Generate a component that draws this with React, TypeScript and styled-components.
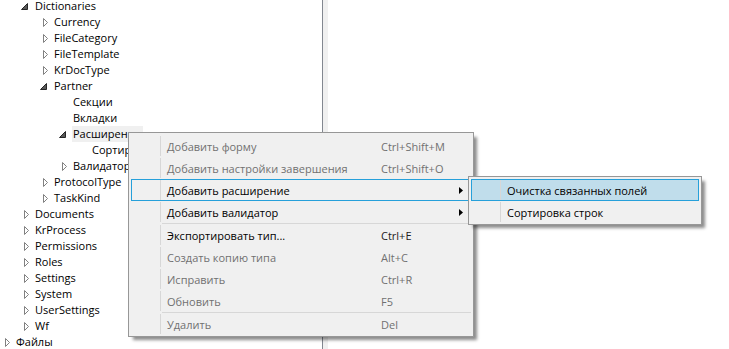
import React from "react";
import styled, { createGlobalStyle } from "styled-components";

type NodeState = "expanded" | "collapsed" | "leaf";

interface TreeNode {
  level: number;
  label: string;
  state: NodeState;
  selected?: boolean;
}

interface MenuEntry {
  label?: string;
  shortcut?: string;
  disabled?: boolean;
  submenu?: boolean;
  highlighted?: boolean;
  separator?: boolean;
}

const tree: TreeNode[] = [
  { level: 1, label: "Dictionaries", state: "expanded" },
  { level: 2, label: "Currency", state: "collapsed" },
  { level: 2, label: "FileCategory", state: "collapsed" },
  { level: 2, label: "FileTemplate", state: "collapsed" },
  { level: 2, label: "KrDocType", state: "collapsed" },
  { level: 2, label: "Partner", state: "expanded" },
  { level: 3, label: "Секции", state: "leaf" },
  { level: 3, label: "Вкладки", state: "leaf" },
  { level: 3, label: "Расширения", state: "expanded", selected: true },
  { level: 4, label: "Сортировка строк", state: "leaf" },
  { level: 3, label: "Валидаторы", state: "collapsed" },
  { level: 2, label: "ProtocolType", state: "collapsed" },
  { level: 2, label: "TaskKind", state: "collapsed" },
  { level: 1, label: "Documents", state: "collapsed" },
  { level: 1, label: "KrProcess", state: "collapsed" },
  { level: 1, label: "Permissions", state: "collapsed" },
  { level: 1, label: "Roles", state: "collapsed" },
  { level: 1, label: "Settings", state: "collapsed" },
  { level: 1, label: "System", state: "collapsed" },
  { level: 1, label: "UserSettings", state: "collapsed" },
  { level: 1, label: "Wf", state: "collapsed" },
  { level: 0, label: "Файлы", state: "collapsed" },
];

const menu: MenuEntry[] = [
  { label: "Добавить форму", shortcut: "Ctrl+Shift+M", disabled: true },
  { label: "Добавить настройки завершения", shortcut: "Ctrl+Shift+O", disabled: true },
  { label: "Добавить расширение", submenu: true, highlighted: true },
  { label: "Добавить валидатор", submenu: true },
  { separator: true },
  { label: "Экспортировать тип...", shortcut: "Ctrl+E" },
  { label: "Создать копию типа", shortcut: "Alt+C", disabled: true },
  { label: "Исправить", shortcut: "Ctrl+R", disabled: true },
  { label: "Обновить", shortcut: "F5", disabled: true },
  { separator: true },
  { label: "Удалить", shortcut: "Del", disabled: true },
];

const submenu: MenuEntry[] = [
  { label: "Очистка связанных полей", highlighted: true },
  { label: "Сортировка строк" },
];

const GlobalStyle = createGlobalStyle`
  html, body {
    margin: 0;
    padding: 0;
    background: #ffffff;
  }
  body {
    font-family: "Segoe UI", "Open Sans", "Noto Sans", sans-serif;
    font-size: 11px;
    color: #000;
  }
`;

const Window = styled.div`
  position: relative;
  display: flex;
  width: 729px;
  height: 349px;
  overflow: hidden;
  background: #fff;
`;

const TreePanel = styled.div`
  width: 322px;
  border-right: 1px solid #828790;
  overflow: hidden;
`;

const TreeList = styled.div`
  display: flex;
  flex-direction: column;
  margin-top: -2px;
`;

const TreeRow = styled.div<{ $level: number }>`
  display: flex;
  align-items: center;
  height: 16px;
  padding-left: ${(p) => p.$level * 19}px;
  white-space: nowrap;
`;

const Toggle = styled.span`
  display: flex;
  width: 15px;
  height: 16px;
  flex: none;
`;

const NodeLabel = styled.span<{ $selected?: boolean }>`
  padding: 0 2px 0 1px;
  line-height: 16px;
  background: ${(p) => (p.$selected ? "#f0f0f0" : "transparent")};
`;

const Splitter = styled.div`
  width: 5px;
  background: #f0f0f0;
`;

const Content = styled.div`
  flex: 1;
  background: #fff;
`;

const MenuBox = styled.div<{ $left: number; $top: number; $width: number }>`
  position: absolute;
  left: ${(p) => p.$left}px;
  top: ${(p) => p.$top}px;
  width: ${(p) => p.$width}px;
  box-sizing: border-box;
  padding: 2px 2px 1px;
  background: #f0f0f0;
  border: 1px solid #979797;
  box-shadow: 4px 4px 3px -1px rgba(0, 0, 0, 0.45);
  display: flex;
  flex-direction: column;
`;

const MenuRow = styled.div<{ $disabled?: boolean; $active?: "open" | "hover" }>`
  display: flex;
  align-items: center;
  height: 22px;
  box-sizing: border-box;
  border: 1px solid ${(p) => (p.$active ? "#26a0da" : "transparent")};
  background: ${(p) => (p.$active === "hover" ? "#c0ddeb" : "transparent")};
  color: ${(p) => (p.$disabled ? "#707070" : "#000")};
  white-space: nowrap;
`;

const IconCell = styled.span`
  width: 28px;
  height: 20px;
  flex: none;
  border-right: 1px solid #d7d7d7;
`;

const ItemLabel = styled.span<{ $basis?: number }>`
  flex: ${(p) => (p.$basis ? `0 0 ${p.$basis}px` : "1")};
  box-sizing: border-box;
  padding: 2px 0 0 6px;
  line-height: 18px;
`;

const Shortcut = styled.span<{ $disabled?: boolean }>`
  flex: 1;
  padding-top: 2px;
  line-height: 18px;
  color: ${(p) => (p.$disabled ? "#707070" : "#222")};
`;

const ArrowCell = styled.span`
  width: 14px;
  flex: none;
  display: flex;
  align-items: center;
  padding-left: 3px;
  box-sizing: border-box;
`;

const Separator = styled.div`
  height: 1px;
  margin-left: 31px;
  background: #d7d7d7;
`;

const ExpandGlyph = ({ state }: { state: NodeState }) => {
  if (state === "leaf") return null;
  return (
    <svg width="15" height="16" viewBox="0 0 15 16">
      {state === "expanded" ? (
        <polygon points="2.5,11.5 8.5,11.5 8.5,5.5" fill="#595959" stroke="#262626" strokeWidth="1" />
      ) : (
        <polygon points="5.5,4.5 5.5,12.5 9.5,8.5" fill="#fff" stroke="#818181" strokeWidth="1" />
      )}
    </svg>
  );
};

const SubArrow = () => (
  <svg width="4" height="7" viewBox="0 0 4 7">
    <polygon points="0,0 4,3.5 0,7" fill="#000" />
  </svg>
);

const Menu = ({ items, left, top, width, labelBasis }: {
  items: MenuEntry[];
  left: number;
  top: number;
  width: number;
  labelBasis?: number;
}) => (
  <MenuBox $left={left} $top={top} $width={width}>
    {items.map((item, i) =>
      item.separator ? (
        <Separator key={i} />
      ) : (
        <MenuRow
          key={i}
          $disabled={item.disabled}
          $active={item.highlighted ? (item.submenu ? "open" : "hover") : undefined}
        >
          <IconCell />
          <ItemLabel $basis={labelBasis}>{item.label}</ItemLabel>
          {labelBasis && <Shortcut $disabled={item.disabled}>{item.shortcut}</Shortcut>}
          {labelBasis && <ArrowCell>{item.submenu && <SubArrow />}</ArrowCell>}
        </MenuRow>
      )
    )}
  </MenuBox>
);

export default function App() {
  return (
    <>
      <GlobalStyle />
      <Window>
        <TreePanel>
          <TreeList>
            {tree.map((node, i) => (
              <TreeRow key={i} $level={node.level}>
                <Toggle>
                  <ExpandGlyph state={node.state} />
                </Toggle>
                <NodeLabel $selected={node.selected}>{node.label}</NodeLabel>
              </TreeRow>
            ))}
          </TreeList>
        </TreePanel>
        <Splitter />
        <Content />

        <Menu items={menu} left={128} top={132} width={346} labelBasis={220} />
        <Menu items={submenu} left={468} top={176} width={234} />
      </Window>
    </>
  );
}
